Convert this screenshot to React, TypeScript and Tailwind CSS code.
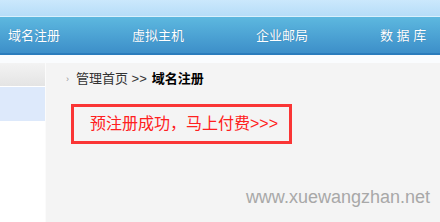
const NAV = ['域名注册', '虚拟主机', '企业邮局', '数 据 库']

const cjk = { fontFamily: '"Liberation Sans", "Noto Sans CJK SC", sans-serif' }

export default function App() {
  return (
    <div className="w-[440px] h-[222px] overflow-hidden bg-white" style={cjk}>
      {/* top strip */}
      <div className="h-[16px] bg-gradient-to-b from-[#cbe8fc] to-[#b6ddf8]" />
      <div className="h-[1px] bg-[#d9f0fd]" />
      {/* nav bar */}
      <div className="h-[38px] flex flex-col">
        <div className="flex-1 flex items-center pl-2 pt-[2px] bg-gradient-to-b from-[#5db8df] to-[#3d8fc9]">
          {NAV.map((n) => (
            <div key={n} className="w-[124px] shrink-0 text-[13px] text-white whitespace-pre [text-shadow:0_0_1px_rgba(0,60,120,0.4)]">
              {n}
            </div>
          ))}
        </div>
        <div className="h-[2px] bg-[#2b7cbc]" />
      </div>
      <div className="h-[8px] bg-[#fafcfe]" />

      <div className="flex h-[160px]">
        {/* left menu */}
        <div className="w-[45px] shrink-0 flex flex-col">
          <div className="h-[23px] bg-gradient-to-b from-[#f3f3f3] to-[#e4e4e4]" />
          <div className="h-[1px] bg-white" />
          <div className="h-[34px] bg-[#dde9fb]" />
          <div className="flex-1 bg-white" />
        </div>
        <div className="w-[1px] bg-[#fbfbfb]" />

        {/* main */}
        <div className="flex-1 bg-[#f4f4f4] relative">
          <div className="flex items-center h-[30px] pl-[20px] pt-[2px] text-[13px] text-[#333]">
            <span className="text-[9px] text-[#999] mr-[7px] mt-[2px]">›</span>
            <span>管理首页 &gt;&gt;</span>
            <span className="font-bold text-black ml-[5px]">域名注册</span>
          </div>
          <div className="ml-[25px] mt-[11px] w-[221px] h-[40px] border-[3px] border-[#fa3535] flex items-center pl-[16px]">
            <span className="text-[16px] text-[#ff2020]">预注册成功，马上付费&gt;&gt;&gt;</span>
          </div>
          <div className="absolute right-[10px] bottom-[12px] text-[18px] text-[#a8a8a8]">www.xuewangzhan.net</div>
        </div>
      </div>
    </div>
  )
}
